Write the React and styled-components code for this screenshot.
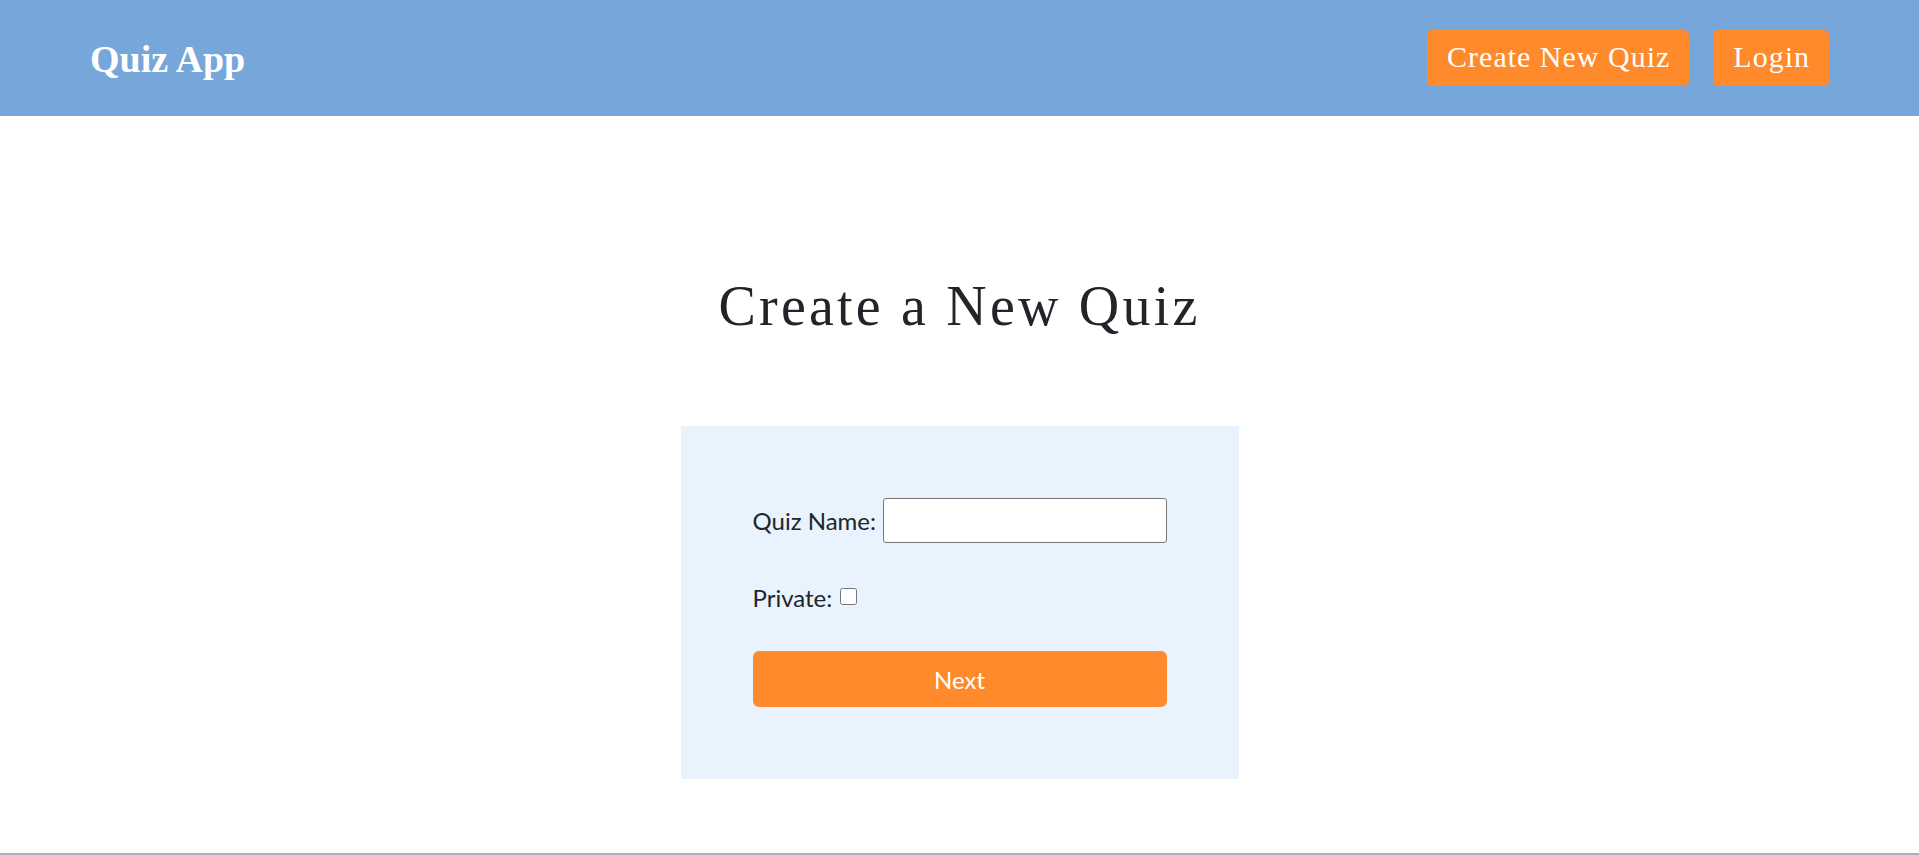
import React from 'react';
import styled, { createGlobalStyle } from 'styled-components';

const GlobalStyle = createGlobalStyle`
  * {
    box-sizing: border-box;
  }
  body {
    margin: 0;
    background: #ffffff;
    color: #212529;
    font-family: Lato, 'Noto Sans', sans-serif;
  }
`;

const App = () => {
  return (
    <>
      <GlobalStyle />
      <Header>
        <Brand>Quiz App</Brand>
        <Nav>
          <NavButton>Create New Quiz</NavButton>
          <NavButton>Login</NavButton>
        </Nav>
      </Header>
      <Main>
        <Title>Create a New Quiz</Title>
        <Card>
          <Row>
            <Label htmlFor="quiz-name">Quiz Name:</Label>
            <TextInput id="quiz-name" type="text" />
          </Row>
          <Row className="private">
            <Label htmlFor="private">Private:</Label>
            <Checkbox id="private" type="checkbox" />
          </Row>
          <NextButton>Next</NextButton>
        </Card>
      </Main>
      <Footer />
    </>
  );
};

export default App;

const Header = styled.header`
  display: flex;
  align-items: center;
  justify-content: space-between;
  height: 116px;
  padding: 0 90px;
  background-color: #77a6da;
`;

const Brand = styled.div`
  font-family: 'Liberation Serif', serif;
  font-size: 38px;
  font-weight: 700;
  color: #ffffff;
  margin-top: 2px;
`;

const Nav = styled.nav`
  display: flex;
  gap: 24px;
`;

const NavButton = styled.button`
  height: 56px;
  padding: 0 19px 2px 20px;
  border: none;
  border-radius: 5px;
  background-color: #ff8a2b;
  color: #ffffff;
  font-family: 'Liberation Serif', serif;
  font-size: 30px;
  letter-spacing: 1px;
  cursor: pointer;
`;

const Main = styled.main`
  display: flex;
  flex-direction: column;
  align-items: center;
`;

const Title = styled.h1`
  margin: 158px 0 88px;
  font-family: 'Liberation Serif', serif;
  font-size: 56px;
  line-height: 64px;
  font-weight: 400;
  letter-spacing: 3.2px;
  color: #212529;
`;

const Card = styled.div`
  display: flex;
  flex-direction: column;
  width: 558px;
  padding: 72px;
  background-color: #e8f3fd;
`;

const Row = styled.div`
  display: flex;
  align-items: center;
  &.private {
    margin-top: 40px;
  }
`;

const Label = styled.label`
  font-size: 24px;
  line-height: 29px;
  color: #212529;
`;

const TextInput = styled.input`
  flex: 1;
  height: 45px;
  margin-left: 7px;
  border: 1px solid #767676;
  border-radius: 3px;
  background: #ffffff;
  font-size: 20px;
`;

const Checkbox = styled.input`
  width: 17px;
  height: 17px;
  margin: 0 0 2px 8px;
`;

const NextButton = styled.button`
  height: 56px;
  margin-top: 39px;
  border: none;
  border-radius: 6px;
  background-color: #ff8a2b;
  color: #ffffff;
  font-family: Lato, 'Noto Sans', sans-serif;
  font-size: 24px;
  cursor: pointer;
`;

const Footer = styled.footer`
  margin-top: 74px;
  height: 40px;
  border-top: 2px solid #aab0c2;
`;
